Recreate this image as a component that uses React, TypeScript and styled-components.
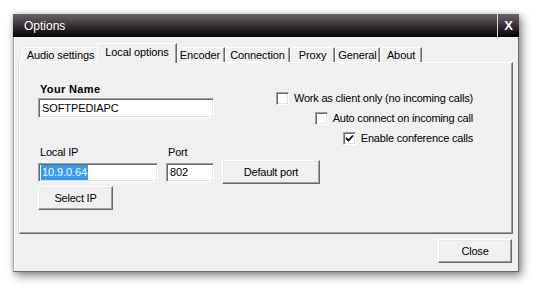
import styled, { createGlobalStyle } from "styled-components";

const GlobalStyle = createGlobalStyle`
    html, body {
        margin: 0;
        padding: 0;
        background: #ffffff;
    }
    body {
        font-family: "Liberation Sans", Arial, sans-serif;
        font-size: 11px;
        color: #000;
    }
`;

const tabs = [
    { name: "Audio settings", width: 77 },
    { name: "Local options", width: 76 },
    { name: "Encoder", width: 50 },
    { name: "Connection", width: 65 },
    { name: "Proxy", width: 45 },
    { name: "General", width: 45 },
    { name: "About", width: 42 },
];
const activeTab = "Local options";

const checks = [
    { label: "Work as client only (no incoming calls)", checked: false },
    { label: "Auto connect on incoming call", checked: false },
    { label: "Enable conference calls", checked: true },
];

const CheckBox = ({ label, checked }: { label: string; checked: boolean }) => (
    <StyledCheckRow>
        <StyledBox>
            {checked && (
                <svg width="9" height="9" viewBox="0 0 9 9">
                    <path d="M1 4 L3.5 6.5 L8 1.5" stroke="#000" strokeWidth="1.8" fill="none" />
                </svg>
            )}
        </StyledBox>
        <StyledCheckLabel>{label}</StyledCheckLabel>
    </StyledCheckRow>
);

export default function App() {
    return (
        <>
            <GlobalStyle />
            <StyledPage>
                <StyledWindow>
                    <StyledTitleBar>
                        <StyledTitle>Options</StyledTitle>
                        <StyledCloseX>X</StyledCloseX>
                    </StyledTitleBar>
                    <StyledBody>
                        <StyledTabStrip>
                            {tabs.map((t) => (
                                <StyledTab key={t.name} $active={t.name === activeTab} $width={t.width}>
                                    {t.name}
                                </StyledTab>
                            ))}
                        </StyledTabStrip>
                        <StyledPanel>
                            <StyledTopRow>
                                <StyledNameGroup>
                                    <StyledBoldLabel>Your Name</StyledBoldLabel>
                                    <StyledInput $width={176} $height={20}>
                                        SOFTPEDIAPC
                                    </StyledInput>
                                </StyledNameGroup>
                                <StyledChecks>
                                    {checks.map((c) => (
                                        <CheckBox key={c.label} label={c.label} checked={c.checked} />
                                    ))}
                                </StyledChecks>
                            </StyledTopRow>
                            <StyledIpGrid>
                                <StyledLabel>Local IP</StyledLabel>
                                <StyledLabel>Port</StyledLabel>
                                <span />
                                <StyledInput $width={120} $height={19}>
                                    <StyledSelection>10.9.0.64</StyledSelection>
                                </StyledInput>
                                <StyledInput $width={48} $height={19}>
                                    802
                                </StyledInput>
                                <StyledButton $width={98}>Default port</StyledButton>
                            </StyledIpGrid>
                            <StyledSelectIp $width={75}>Select IP</StyledSelectIp>
                        </StyledPanel>
                        <StyledFooter>
                            <StyledButton $width={74}>Close</StyledButton>
                        </StyledFooter>
                    </StyledBody>
                </StyledWindow>
            </StyledPage>
        </>
    );
}

const StyledPage = styled.div`
    padding: 14px 0 0 13px;
    width: 540px;
    height: 292px;
    box-sizing: border-box;
`;

const StyledWindow = styled.div`
    width: 506px;
    height: 258px;
    box-sizing: border-box;
    background: #f0f0f0;
    border-left: 1px solid #a9a9a9;
    border-right: 1px solid #6a6a6a;
    border-bottom: 1px solid #6a6a6a;
    box-shadow: inset 1px 0 0 #ffffff, 3px 4px 9px rgba(0, 0, 0, 0.45), 0 0 5px rgba(0, 0, 0, 0.18);
    display: flex;
    flex-direction: column;
`;

const StyledTitleBar = styled.div`
    height: 23px;
    flex: none;
    display: flex;
    align-items: center;
    background: linear-gradient(#6d646b, #2c282b 60%, #000000);
    margin-left: -1px;
    margin-right: -1px;
`;

const StyledTitle = styled.div`
    flex: 1;
    padding-left: 11px;
    color: #ffffff;
    font-size: 12px;
    font-family: "Liberation Sans", Arial, sans-serif;
`;

const StyledCloseX = styled.div`
    width: 22px;
    height: 23px;
    box-sizing: border-box;
    border-left: 1px solid #d8d8d8;
    display: flex;
    align-items: center;
    justify-content: center;
    color: #ffffff;
    font-weight: bold;
    font-size: 13px;
`;

const StyledBody = styled.div`
    flex: 1;
    display: flex;
    flex-direction: column;
    padding: 6px 5px 0 5px;
`;

const StyledTabStrip = styled.div`
    height: 19px;
    display: flex;
    align-items: flex-end;
    padding-left: 3px;
    position: relative;
    z-index: 1;
`;

const StyledTab = styled.div<{ $active: boolean; $width: number }>`
    box-sizing: border-box;
    width: ${(p) => (p.$active ? p.$width + 4 : p.$width)}px;
    height: ${(p) => (p.$active ? "20px" : "15px")};
    margin: ${(p) => (p.$active ? "0 -2px -1px -2px" : "0")};
    padding-bottom: ${(p) => (p.$active ? "3px" : "0")};
    background: #f0f0f0;
    border-top: 1px solid #ffffff;
    border-left: 1px solid #ffffff;
    border-right: 1px solid #696969;
    box-shadow: inset -1px 0 0 #a0a0a0;
    display: flex;
    align-items: center;
    justify-content: center;
    white-space: nowrap;
    letter-spacing: -0.1px;
    position: relative;
    z-index: ${(p) => (p.$active ? 2 : 0)};
`;

const StyledPanel = styled.div`
    height: 172px;
    box-sizing: border-box;
    border-top: 1px solid #ffffff;
    border-left: 1px solid #ffffff;
    border-right: 1px solid #696969;
    border-bottom: 1px solid #696969;
    box-shadow: inset -1px -1px 0 #a0a0a0, -1px 0 0 #dcdcdc;
    padding: 20px 39px 0 18px;
    display: flex;
    flex-direction: column;
    align-items: flex-start;
`;

const StyledTopRow = styled.div`
    align-self: stretch;
    display: flex;
    justify-content: space-between;
    align-items: flex-start;
`;

const StyledNameGroup = styled.div`
    display: flex;
    flex-direction: column;
    gap: 2px;
`;

const StyledBoldLabel = styled.div`
    font-weight: bold;
    line-height: 13px;
    letter-spacing: 0.35px;
    padding-left: 2px;
`;

const StyledLabel = styled.div`
    line-height: 13px;
    padding-left: 2px;
    letter-spacing: -0.2px;
`;

const StyledChecks = styled.div`
    display: flex;
    flex-direction: column;
    align-items: flex-end;
    margin-top: 5px;
    margin-bottom: -2px;
`;

const StyledCheckRow = styled.div`
    height: 20px;
    display: flex;
    align-items: center;
    gap: 5px;
`;

const StyledBox = styled.div`
    width: 13px;
    height: 13px;
    box-sizing: border-box;
    background: #ffffff;
    border-top: 1px solid #a0a0a0;
    border-left: 1px solid #a0a0a0;
    border-right: 1px solid #ffffff;
    border-bottom: 1px solid #ffffff;
    box-shadow: inset 1px 1px 0 #696969, inset -1px -1px 0 #e3e3e3;
    display: flex;
    align-items: center;
    justify-content: center;
`;

const StyledCheckLabel = styled.span`
    letter-spacing: -0.2px;
    white-space: nowrap;
`;

const StyledIpGrid = styled.div`
    display: grid;
    grid-template-columns: 120px 48px 98px;
    grid-template-rows: 13px 24px;
    column-gap: 8px;
    row-gap: 1px;
    align-items: center;
`;

const StyledInput = styled.div<{ $width: number; $height: number }>`
    width: ${(p) => p.$width}px;
    height: ${(p) => p.$height}px;
    box-sizing: border-box;
    background: #ffffff;
    border-top: 1px solid #a0a0a0;
    border-left: 1px solid #a0a0a0;
    border-right: 1px solid #ffffff;
    border-bottom: 1px solid #ffffff;
    box-shadow: inset 1px 1px 0 #696969, inset -1px -1px 0 #e3e3e3;
    padding: 0 3px;
    display: flex;
    align-items: center;
    white-space: nowrap;
    letter-spacing: -0.1px;
`;

const StyledSelection = styled.span`
    background: #3399ff;
    color: #ffffff;
    line-height: 15px;
    padding: 0 1px;
    margin-left: -1px;
`;

const StyledButton = styled.div<{ $width: number }>`
    width: ${(p) => p.$width}px;
    height: 24px;
    box-sizing: border-box;
    background: #f0f0f0;
    border-top: 1px solid #ffffff;
    border-left: 1px solid #ffffff;
    border-right: 1px solid #696969;
    border-bottom: 1px solid #696969;
    box-shadow: inset -1px -1px 0 #a0a0a0, inset 1px 1px 0 #e8e8e8;
    display: flex;
    align-items: center;
    justify-content: center;
    white-space: nowrap;
    letter-spacing: -0.2px;
`;

const StyledSelectIp = styled(StyledButton)`
    margin-top: 2px;
`;

const StyledFooter = styled.div`
    display: flex;
    justify-content: flex-end;
    padding: 5px 1px 0 0;
`;
